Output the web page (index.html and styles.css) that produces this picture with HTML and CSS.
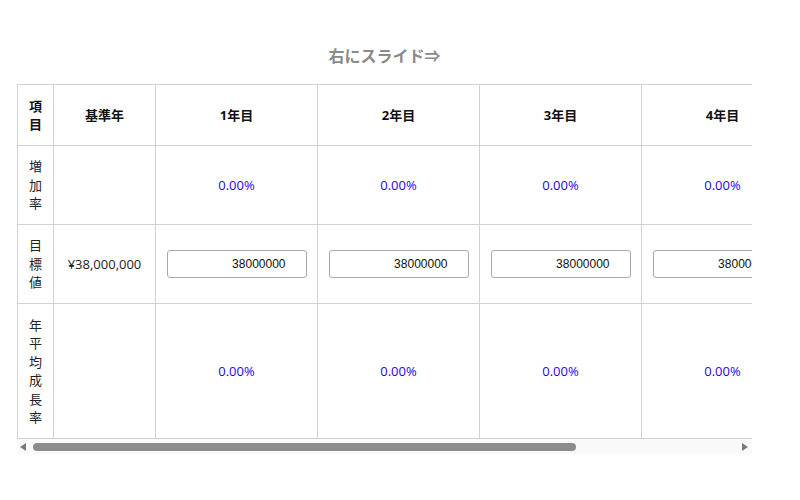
FILE: index.html
```html
<!DOCTYPE html>
<html lang="ja">
<head>
<meta charset="utf-8">
<link rel="stylesheet" href="styles.css">
</head>
<body>
<div class="wrap">
  <p class="hint">右にスライド⇒</p>
  <div class="scroller">
    <table class="grid">
      <colgroup>
        <col class="c-item"><col class="c-base"><col class="c-year"><col class="c-year"><col class="c-year"><col class="c-year"><col class="c-year">
      </colgroup>
      <thead>
        <tr>
          <th class="item">項目</th>
          <th>基準年</th>
          <th>1年目</th>
          <th>2年目</th>
          <th>3年目</th>
          <th>4年目</th>
          <th>5年目</th>
        </tr>
      </thead>
      <tbody>
        <tr>
          <td class="item">増加率</td>
          <td></td>
          <td class="rate">0.00%</td>
          <td class="rate">0.00%</td>
          <td class="rate">0.00%</td>
          <td class="rate">0.00%</td>
          <td class="rate">0.00%</td>
        </tr>
        <tr>
          <td class="item">目標値</td>
          <td class="base">¥38,000,000</td>
          <td><input class="amount" type="text" value="38000000"></td>
          <td><input class="amount" type="text" value="38000000"></td>
          <td><input class="amount" type="text" value="38000000"></td>
          <td><input class="amount" type="text" value="38000000"></td>
          <td><input class="amount" type="text" value="38000000"></td>
        </tr>
        <tr>
          <td class="item">年平均成長率</td>
          <td></td>
          <td class="rate">0.00%</td>
          <td class="rate">0.00%</td>
          <td class="rate">0.00%</td>
          <td class="rate">0.00%</td>
          <td class="rate">0.00%</td>
        </tr>
      </tbody>
    </table>
  </div>
  <div class="hscroll" aria-hidden="true">
    <span class="arrow arrow-left"></span>
    <div class="track"><div class="thumb"></div></div>
    <span class="arrow arrow-right"></span>
  </div>
</div>
</body>
</html>
```
FILE: styles.css
```css
html, body {
  margin: 0;
  padding: 0;
  background: #fff;
}
body {
  font-family: "Open Sans", "Noto Sans CJK JP", sans-serif;
  color: #222;
}
.wrap {
  width: 735px;
  margin: 0 0 0 17px;
  padding-top: 43px;
}
.hint {
  margin: 0 0 17px;
  text-align: center;
  font-family: "Noto Sans CJK JP", sans-serif;
  font-size: 16px;
  line-height: 24px;
  font-weight: bold;
  color: #8a8a8a;
}
.scroller {
  overflow: hidden;
  width: 735px;
}
.hscroll {
  display: flex;
  align-items: center;
  height: 15px;
  background: #f8f9fa;
}
.arrow {
  width: 0;
  height: 0;
  border-top: 4px solid transparent;
  border-bottom: 4px solid transparent;
}
.arrow-left {
  margin: 0 0 0 3px;
  border-right: 6px solid #7a7a7a;
}
.arrow-right {
  margin: 0 4px 0 0;
  border-left: 6px solid #7a7a7a;
}
.track {
  flex: 1;
  display: flex;
  align-items: center;
  padding: 0 8px 0 7px;
}
.thumb {
  width: 543px;
  height: 8px;
  border-radius: 4px;
  background: #8c8c8c;
}
.grid {
  border-collapse: collapse;
  table-layout: fixed;
  width: 948px;
  font-size: 13px;
  line-height: 18.5px;
}
.c-item { width: 36px; }
.c-base { width: 102px; }
.c-year { width: 162px; }
.grid th, .grid td {
  border: 1px solid #d2d2d2;
  padding: 11.5px 10px;
  text-align: center;
  vertical-align: middle;
}
.grid tbody tr:first-child td {
  padding-top: 11px;
  padding-bottom: 11px;
}
.grid th {
  font-weight: bold;
  color: #111;
}
.grid .item {
  font-family: "Noto Sans CJK JP", sans-serif;
  color: #222;
}
.grid th.item { color: #111; }
.rate {
  color: #1f00ff;
}
.base {
  color: #222;
}
.amount {
  box-sizing: border-box;
  width: 140px;
  height: 28px;
  border: 1px solid #a9a9a9;
  border-radius: 3px;
  padding: 0 20px 0 4px;
  font-family: "Liberation Sans", Arial, sans-serif;
  font-size: 12px;
  text-align: right;
  color: #111;
  background: #fff;
  vertical-align: middle;
}
```
